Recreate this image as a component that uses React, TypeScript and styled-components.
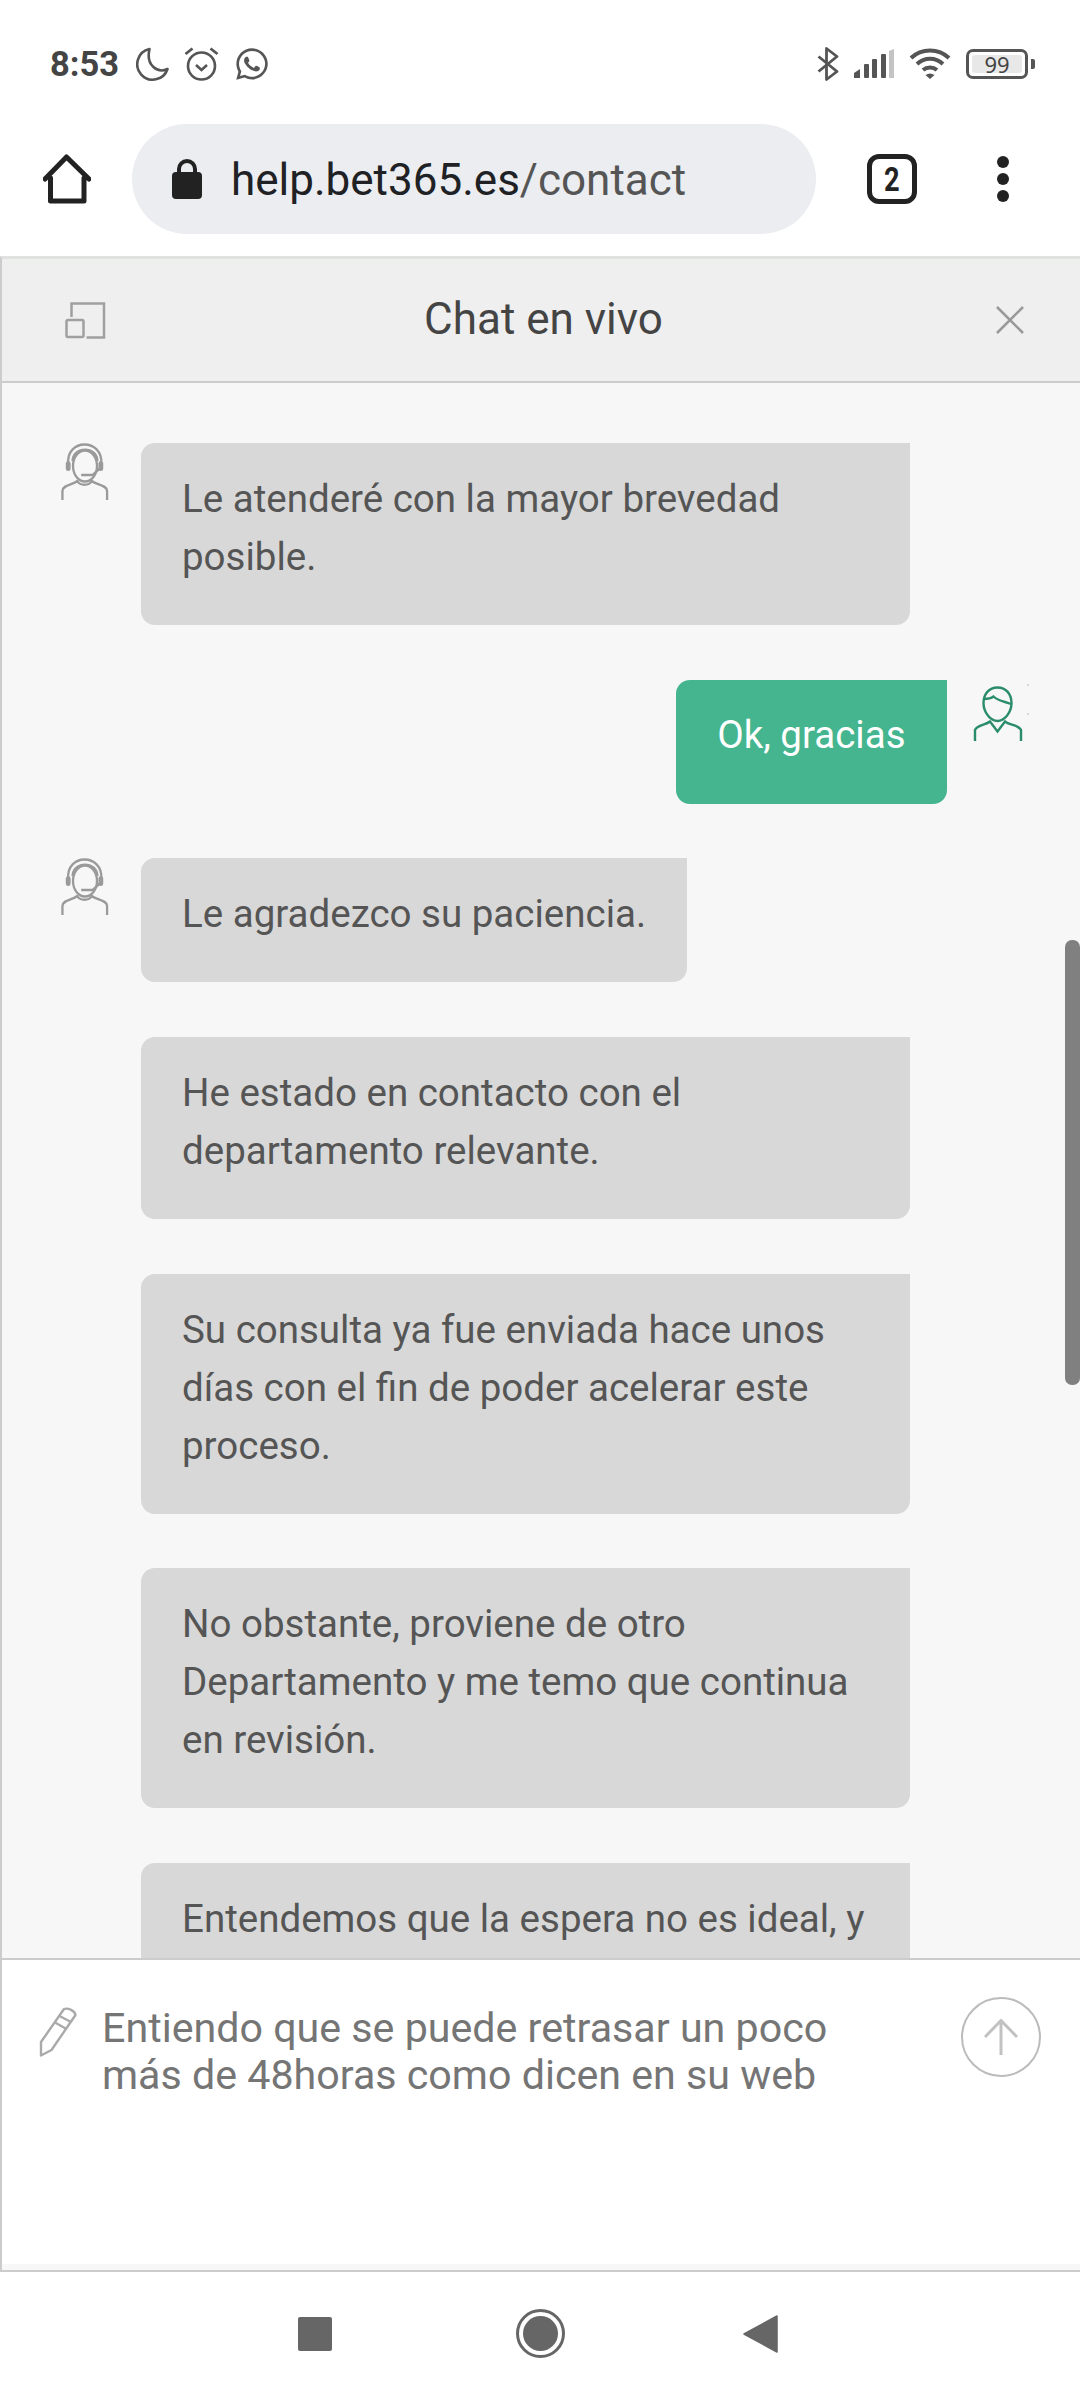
import React from "react"
import styled, { createGlobalStyle } from "styled-components"
import { FaWhatsapp } from "react-icons/fa"

const GlobalStyle = createGlobalStyle`
    html, body {
        margin: 0;
        padding: 0;
        background: #fff;
        font-family: Roboto, "Liberation Sans", sans-serif;
    }
`

const Page = styled.div`
    width: 1080px;
    height: 2400px;
    display: flex;
    flex-direction: column;
    overflow: hidden;
    background: #fff;
`

const StatusBar = styled.div`
    height: 124px;
    flex: none;
    box-sizing: border-box;
    padding: 47px 52px 0 50px;
    display: flex;
    justify-content: space-between;
    align-items: flex-start;
`

const StatusGroup = styled.div<{ $gap: number }>`
    display: flex;
    align-items: center;
    height: 34px;
    gap: ${p => p.$gap}px;
`

const Time = styled.span`
    font-size: 34.5px;
    font-weight: 700;
    color: #444;
    margin-right: 2px;
    line-height: 34px;
`

const Battery = styled.div`
    width: 62px;
    height: 30px;
    box-sizing: border-box;
    border: 3px solid #555;
    border-radius: 7px;
    padding: 3px;
    position: relative;
    display: flex;
`

const BatteryLevel = styled.div`
    flex: 1;
    background: #e8e8e8;
    border-radius: 3px;
    font-size: 22px;
    line-height: 18px;
    color: #444;
    text-align: center;
    font-family: "Noto Sans", Roboto, sans-serif;
`

const BatteryNub = styled.div`
    position: absolute;
    right: -10px;
    top: 7px;
    width: 4px;
    height: 10px;
    background: #555;
    border-radius: 0 2px 2px 0;
`

const Toolbar = styled.div`
    height: 132px;
    flex: none;
    box-sizing: border-box;
    padding: 0 0 22px 43px;
    display: flex;
    align-items: center;
`

const UrlPill = styled.div`
    width: 684px;
    height: 110px;
    margin-left: 41px;
    box-sizing: border-box;
    border-radius: 55px;
    background: #ebedf0;
    display: flex;
    align-items: center;
    padding-left: 40px;
    gap: 29px;
`

const UrlText = styled.div`
    font-size: 44px;
    color: #202124;
    white-space: nowrap;
    padding-top: 2px;
    span {
        color: #555;
    }
`

const TabCount = styled.div`
    width: 50px;
    height: 50px;
    box-sizing: border-box;
    margin-left: 51px;
    border: 5px solid #222;
    border-radius: 12px;
    display: flex;
    align-items: center;
    justify-content: center;
    font-size: 34px;
    font-weight: 700;
    color: #222;
`

const TabDigit = styled.span`
    display: inline-block;
    transform: scaleX(0.8);
`

const MenuDots = styled.div`
    margin-left: 80px;
    display: flex;
    flex-direction: column;
    gap: 5px;
    i {
        display: block;
        width: 12px;
        height: 12px;
        border-radius: 50%;
        background: #222;
    }
`

const ChatPanel = styled.div`
    flex: 1;
    min-height: 0;
    display: flex;
    flex-direction: column;
    border-top: 3px solid #e0e2e0;
    border-left: 2px solid #ccc;
    border-bottom: 2px solid #ccc;
    background: #f7f7f7;
`

const ChatHeader = styled.div`
    height: 124px;
    flex: none;
    box-sizing: border-box;
    border-bottom: 2px solid #ccc;
    background: #efefef;
    display: flex;
    align-items: center;
    justify-content: space-between;
    padding: 0 56px 0 63px;
`

const ChatTitle = styled.div`
    font-size: 44px;
    color: #444;
    margin: -2px 0 0 -16px;
`

const Messages = styled.div`
    flex: 1;
    min-height: 0;
    overflow: hidden;
    position: relative;
    box-sizing: border-box;
    padding-top: 60px;
    display: flex;
    flex-direction: column;
    gap: 54.7px;
`

const Scrollbar = styled.div`
    position: absolute;
    right: 0;
    top: 557px;
    width: 15px;
    height: 445px;
    border-radius: 7px;
    background: #808080;
`

const AgentRow = styled.div`
    flex: none;
    display: flex;
    align-items: flex-start;
    padding-left: 59px;
    gap: 32px;
`

const UserRow = styled.div`
    flex: none;
    display: flex;
    align-items: flex-start;
    justify-content: flex-end;
    padding-right: 58px;
    gap: 27px;
`

const AvatarSlot = styled.div<{ $offset?: number }>`
    width: 48px;
    flex: none;
    height: 58px;
    padding-top: ${p => p.$offset ?? 0}px;
    svg {
        display: block;
        overflow: visible;
    }
`

const Bubble = styled.div<{ $mine?: boolean; $wide?: boolean }>`
    box-sizing: border-box;
    ${p => (p.$wide ? "width: 769px;" : "")}
    padding: ${p => (p.$mine ? "26px 41.5px 40px 41.5px" : "27px 41px 39px")};
    font-size: 38.5px;
    line-height: 58px;
    border-radius: 14px 0 14px 14px;
    background: ${p => (p.$mine ? "#44b58f" : "#d8d8d8")};
    color: ${p => (p.$mine ? "#fff" : "#555")};
`

const Composer = styled.div`
    height: 312px;
    flex: none;
    box-sizing: border-box;
    border-top: 2px solid #ccc;
    border-bottom: 6px solid #f7f7f7;
    background: #fff;
    display: flex;
    align-items: flex-start;
    padding: 44px 39px 0 37px;
`

const PencilSlot = styled.div`
    flex: none;
    padding-top: 3px;
`

const DraftText = styled.div`
    flex: 1;
    margin-left: 24px;
    margin-top: 1px;
    font-size: 41.2px;
    line-height: 47px;
    color: #757575;
`

const SendButton = styled.div`
    width: 80px;
    height: 80px;
    margin-top: -7px;
    flex: none;
    box-sizing: border-box;
    border: 2px solid #bbb;
    border-radius: 50%;
    display: flex;
    align-items: center;
    justify-content: center;
`

const NavBar = styled.div`
    height: 128px;
    flex: none;
    box-sizing: border-box;
    display: flex;
    align-items: center;
    padding: 0 0 5px 298px;
`

const NavSquare = styled.div`
    width: 34px;
    height: 34px;
    border-radius: 2px;
    background: #666;
`

const NavHome = styled.div`
    width: 49px;
    height: 49px;
    margin-left: 184px;
    box-sizing: border-box;
    border: 3px solid #666;
    border-radius: 50%;
    padding: 4px;
    &::after {
        content: "";
        display: block;
        width: 100%;
        height: 100%;
        border-radius: 50%;
        background: #666;
    }
`

const NavBack = styled.svg`
    margin-left: 178px;
`

const MoonIcon = () => (
    <svg width="33" height="34" viewBox="0 0 33 34" fill="none">
        <path
            d="M13.5 2 A15.5 15.5 0 1 0 31.5 22 C22 26.5 9.5 19 13.5 2 Z"
            stroke="#555"
            strokeWidth="2.6"
            strokeLinejoin="round"
        />
    </svg>
)

const AlarmIcon = () => (
    <svg width="35" height="34" viewBox="0 0 34 34" fill="none" stroke="#555">
        <circle cx="17" cy="19" r="13.5" strokeWidth="2.6" />
        <path d="M11.5 18 L17 23 L22.5 18" strokeWidth="2.6" />
        <path d="M1 7 L8 1.5 M33 7 L26 1.5" strokeWidth="2.8" />
    </svg>
)

const BluetoothIcon = () => (
    <svg width="22" height="34" viewBox="0 0 22 34" fill="none">
        <path
            d="M1.5 9.5 L20 24.5 L9.5 32.5 V1.5 L20 9.5 L1.5 24.5"
            stroke="#555"
            strokeWidth="2.8"
            strokeLinejoin="round"
        />
    </svg>
)

const SignalIcon = () => (
    <svg width="40" height="30" viewBox="0 0 40 30">
        <path d="M0 24 L6 20 V29 H0 Z" fill="#555" />
        <rect x="10" y="15" width="5" height="14" rx="1" fill="#555" />
        <rect x="18" y="10" width="5" height="19" rx="1" fill="#555" />
        <rect x="27" y="5" width="5" height="24" rx="1" fill="#555" />
        <path d="M35 2 L40 0 V29 H35 Z" fill="#c4c4c4" />
    </svg>
)

const WifiIcon = () => (
    <svg width="42" height="32" viewBox="0 0 41 32" fill="none" stroke="#555" strokeWidth="4">
        <path d="M1.5 10 C12 0 29 0 39.5 10" />
        <path d="M7.5 16 C15 9 26 9 33.5 16" />
        <path d="M13.5 22 C17.5 18.5 23.5 18.5 27.5 22" />
        <path d="M20.5 31 L16 27 C19 25 22 25 25 27 Z" fill="#555" stroke="none" />
    </svg>
)

const HomeIcon = () => (
    <svg width="48" height="50" viewBox="0 0 48 50" fill="none">
        <path
            d="M2 25 L23.5 3 L46 25 M7.5 24 V47 H41 V24"
            stroke="#222"
            strokeWidth="5"
            strokeLinecap="round"
            strokeLinejoin="round"
        />
    </svg>
)

const LockIcon = () => (
    <svg width="30" height="40" viewBox="0 0 30 40">
        <path d="M7 15 V10 A8 8 0 0 1 23 10 V15" fill="none" stroke="#222" strokeWidth="4" />
        <rect x="0" y="13" width="30" height="27" rx="4" fill="#222" />
    </svg>
)

const RestoreIcon = () => (
    <svg width="42" height="37" viewBox="0 0 42 37" fill="none" stroke="#a0a0a0" strokeWidth="2.5">
        <path d="M6.5 15 V1.5 H39 V35.5 H21.5" />
        <rect x="1.5" y="18" width="17" height="17" rx="1.5" />
    </svg>
)

const CloseIcon = () => (
    <svg width="28" height="28" viewBox="0 0 28 28" stroke="#999" strokeWidth="2.6">
        <path d="M1 1 L27 27 M27 1 L1 27" />
    </svg>
)

const AgentIcon = () => (
    <svg width="48" height="58" viewBox="0 0 50 58" preserveAspectRatio="none" fill="none" stroke="#9a9a9a" strokeWidth="2.4">
        <path d="M7.5 21 C5 -5 44 -5 42 21" />
        <path d="M12 18 C13 3 37 3 38 18" />
        <ellipse cx="25" cy="23" rx="12.5" ry="15.5" />
        <rect x="5" y="18" width="5" height="10" rx="2.5" fill="#9a9a9a" stroke="none" />
        <rect x="39" y="18" width="5" height="10" rx="2.5" fill="#9a9a9a" stroke="none" />
        <path d="M21 32 H33 L41 25" />
        <path d="M1.5 57 V48 C1.5 42 12 42 17 38 C20 43 29 43 32 38 C37 42 48 42 48 48 V57" />
    </svg>
)

const UserIcon = () => (
    <svg width="48" height="56" viewBox="0 0 48 56" fill="none" stroke="#2a8c6c" strokeWidth="2.4">
        <path d="M23.5 1.5 C32 1.5 37.5 8 37.5 17 C37.5 27 30 35 23.5 35 C17 35 9.5 27 9.5 17 C9.5 8 15 1.5 23.5 1.5 Z" />
        <path d="M9.5 13 C13 13 17 12.5 19.5 10.5 C24 15 31 15.5 37 18" />
        <path d="M1 55 V44 C3 39 12 39 16 35.5 L23.5 45.5 L31 35.5 C35 39 45 39 47 44 V55" />
        <path d="M54 -2 V0 M54 27 V29" stroke="#bbb" strokeWidth="1" />
    </svg>
)

const PencilIcon = () => (
    <svg width="39" height="50" viewBox="0 0 39 50" fill="none" stroke="#aaa" strokeWidth="2.4" strokeLinejoin="round">
        <path d="M2 48.5 V35 L25 2 C29 0.5 36 4 36.5 8 L12.5 43 Z" />
        <path d="M20.5 9 L32 15 M16 15.5 L27.5 22" />
    </svg>
)

const ArrowUpIcon = () => (
    <svg width="34" height="36" viewBox="0 0 34 36" fill="none" stroke="#c2c2c2" strokeWidth="3">
        <path d="M17 1.5 V36 M1 18 L17 1.5 L33 18" />
    </svg>
)

export default function App() {
    return (
        <Page>
            <GlobalStyle />
            <StatusBar>
                <StatusGroup $gap={15}>
                    <Time>8:53</Time>
                    <MoonIcon />
                    <AlarmIcon />
                    <FaWhatsapp size={36} color="#555" />
                </StatusGroup>
                <StatusGroup $gap={15}>
                    <BluetoothIcon />
                    <SignalIcon />
                    <WifiIcon />
                    <Battery>
                        <BatteryLevel>99</BatteryLevel>
                        <BatteryNub />
                    </Battery>
                </StatusGroup>
            </StatusBar>

            <Toolbar>
                <HomeIcon />
                <UrlPill>
                    <LockIcon />
                    <UrlText>
                        help.bet365.es<span>/contact</span>
                    </UrlText>
                </UrlPill>
                <TabCount>
                    <TabDigit>2</TabDigit>
                </TabCount>
                <MenuDots>
                    <i />
                    <i />
                    <i />
                </MenuDots>
            </Toolbar>

            <ChatPanel>
                <ChatHeader>
                    <RestoreIcon />
                    <ChatTitle>Chat en vivo</ChatTitle>
                    <CloseIcon />
                </ChatHeader>

                <Messages>
                    <AgentRow>
                        <AvatarSlot>
                            <AgentIcon />
                        </AvatarSlot>
                        <Bubble $wide>Le atenderé con la mayor brevedad posible.</Bubble>
                    </AgentRow>
                    <UserRow>
                        <Bubble $mine>Ok, gracias</Bubble>
                        <AvatarSlot $offset={6}>
                            <UserIcon />
                        </AvatarSlot>
                    </UserRow>
                    <AgentRow>
                        <AvatarSlot>
                            <AgentIcon />
                        </AvatarSlot>
                        <Bubble>Le agradezco su paciencia.</Bubble>
                    </AgentRow>
                    <AgentRow>
                        <AvatarSlot />
                        <Bubble $wide>He estado en contacto con el departamento relevante.</Bubble>
                    </AgentRow>
                    <AgentRow>
                        <AvatarSlot />
                        <Bubble $wide>
                            Su consulta ya fue enviada hace unos días con el fin de poder acelerar este proceso.
                        </Bubble>
                    </AgentRow>
                    <AgentRow>
                        <AvatarSlot />
                        <Bubble $wide>
                            No obstante, proviene de otro Departamento y me temo que continua en revisión.
                        </Bubble>
                    </AgentRow>
                    <AgentRow>
                        <AvatarSlot />
                        <Bubble $wide>Entendemos que la espera no es ideal, y</Bubble>
                    </AgentRow>
                    <Scrollbar />
                </Messages>

                <Composer>
                    <PencilSlot>
                        <PencilIcon />
                    </PencilSlot>
                    <DraftText>
                        Entiendo que se puede retrasar un poco
                        <br />
                        más de 48horas como dicen en su web
                    </DraftText>
                    <SendButton>
                        <ArrowUpIcon />
                    </SendButton>
                </Composer>
            </ChatPanel>

            <NavBar>
                <NavSquare />
                <NavHome />
                <NavBack width="35" height="38" viewBox="0 0 35 38">
                    <path d="M34 1 V37 L1 19 Z" fill="#666" stroke="#666" strokeWidth="1.5" strokeLinejoin="round" />
                </NavBack>
            </NavBar>
        </Page>
    )
}
